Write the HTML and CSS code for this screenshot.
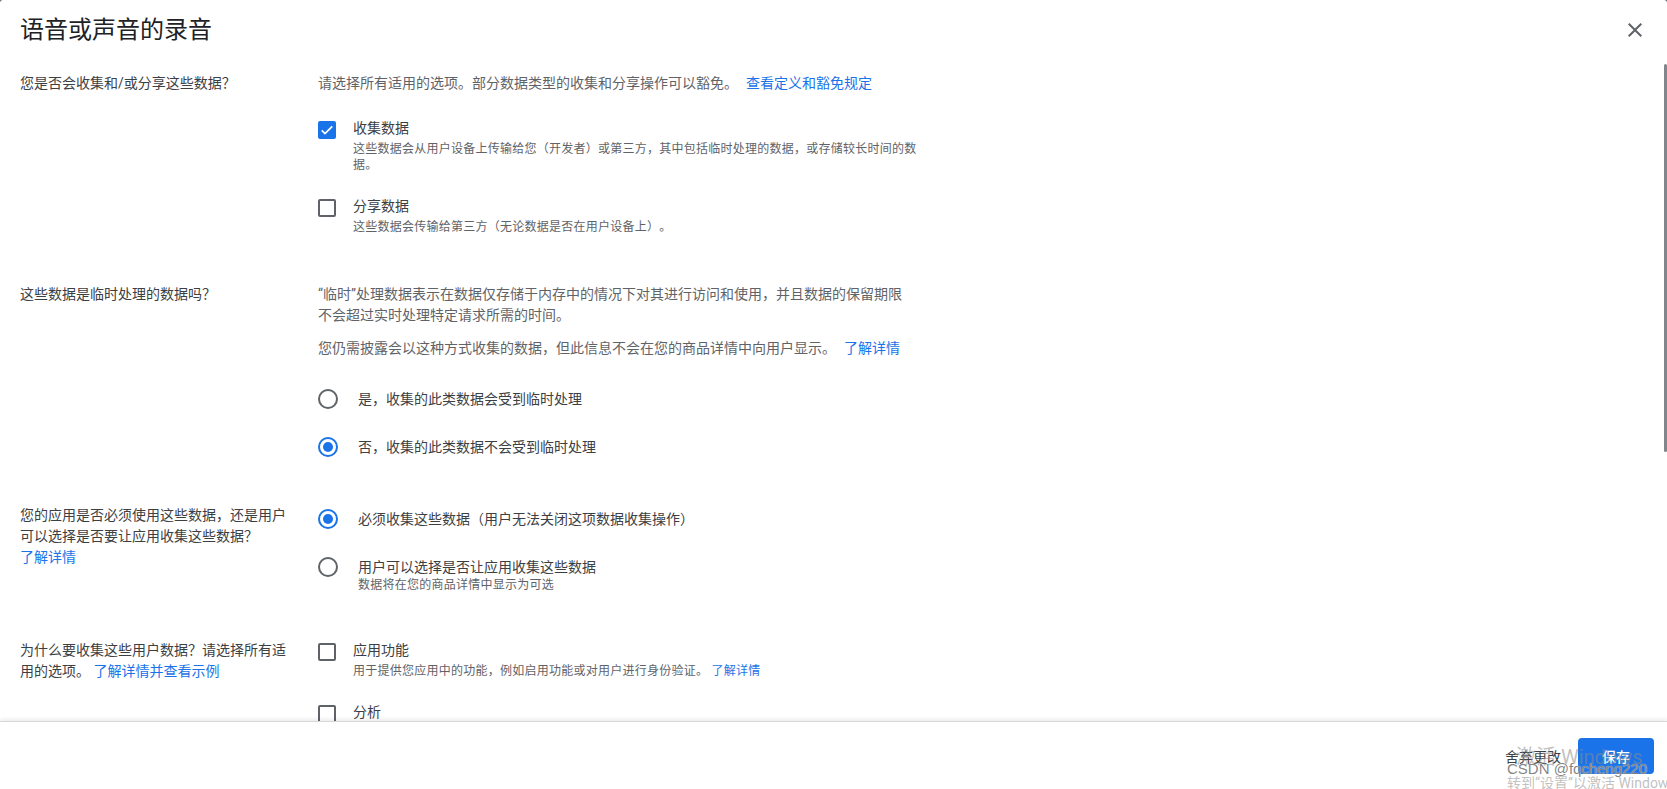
FILE: index.html
```html
<!DOCTYPE html>
<html lang="zh-CN">
<head>
    <meta charset="UTF-8">
    <meta name="viewport" content="width=device-width, initial-scale=1.0">
    <title>语音或声音的录音</title>
    <link rel="stylesheet" href="styles.css">
</head>
<body>
    <div class="dialog">
        <div class="dialog-header">
            <h1>语音或声音的录音</h1>
            <button class="close-btn" aria-label="关闭">
                <svg viewBox="0 0 24 24" width="24" height="24"><path d="M19 6.41L17.59 5 12 10.59 6.41 5 5 6.41 10.59 12 5 17.59 6.41 19 12 13.41 17.59 19 19 17.59 13.41 12z"/></svg>
            </button>
        </div>

        <div class="dialog-body">
            <!-- 收集 / 分享 -->
            <div class="section">
                <div class="question">您是否会收集和/或分享这些数据？</div>
                <div class="answer">
                    <p class="hint">请选择所有适用的选项。部分数据类型的收集和分享操作可以豁免。<a href="#">查看定义和豁免规定</a></p>
                    <div class="check-list">
                        <div class="check-item">
                            <span class="checkbox checked">
                                <svg viewBox="0 0 24 24"><path d="M3 12.5l5.6 5.6L21 5.7"/></svg>
                            </span>
                            <div class="item-text">
                                <div class="item-title">收集数据</div>
                                <div class="item-desc">这些数据会从用户设备上传输给您（开发者）或第三方，其中包括临时处理的数据，或存储较长时间的数据。</div>
                            </div>
                        </div>
                        <div class="check-item">
                            <span class="checkbox"></span>
                            <div class="item-text">
                                <div class="item-title">分享数据</div>
                                <div class="item-desc">这些数据会传输给第三方（无论数据是否在用户设备上）。</div>
                            </div>
                        </div>
                    </div>
                </div>
            </div>

            <!-- 临时处理 -->
            <div class="section section-ephemeral">
                <div class="question">这些数据是临时处理的数据吗？</div>
                <div class="answer">
                    <p class="para">“临时”处理数据表示在数据仅存储于内存中的情况下对其进行访问和使用，并且数据的保留期限不会超过实时处理特定请求所需的时间。</p>
                    <p class="para">您仍需披露会以这种方式收集的数据，但此信息不会在您的商品详情中向用户显示。<a href="#">了解详情</a></p>
                    <div class="radio-list">
                        <div class="radio-item">
                            <span class="radio"></span>
                            <div class="item-text">
                                <div class="item-title">是，收集的此类数据会受到临时处理</div>
                            </div>
                        </div>
                        <div class="radio-item">
                            <span class="radio checked"></span>
                            <div class="item-text">
                                <div class="item-title">否，收集的此类数据不会受到临时处理</div>
                            </div>
                        </div>
                    </div>
                </div>
            </div>

            <!-- 必须 / 可选 -->
            <div class="section section-required">
                <div class="question question-offset">
                    您的应用是否必须使用这些数据，还是用户可以选择是否要让应用收集这些数据？
                    <a class="block-link" href="#">了解详情</a>
                </div>
                <div class="answer">
                    <div class="radio-list flush">
                        <div class="radio-item">
                            <span class="radio checked"></span>
                            <div class="item-text">
                                <div class="item-title">必须收集这些数据（用户无法关闭这项数据收集操作）</div>
                            </div>
                        </div>
                        <div class="radio-item">
                            <span class="radio"></span>
                            <div class="item-text">
                                <div class="item-title">用户可以选择是否让应用收集这些数据</div>
                                <div class="item-desc tight">数据将在您的商品详情中显示为可选</div>
                            </div>
                        </div>
                    </div>
                </div>
            </div>

            <!-- 收集目的 -->
            <div class="section section-purpose">
                <div class="question">为什么要收集这些用户数据？请选择所有适用的选项。 <a href="#">了解详情并查看示例</a></div>
                <div class="answer">
                    <div class="check-list flush">
                        <div class="check-item">
                            <span class="checkbox"></span>
                            <div class="item-text">
                                <div class="item-title">应用功能</div>
                                <div class="item-desc">用于提供您应用中的功能，例如启用功能或对用户进行身份验证。 <a href="#">了解详情</a></div>
                            </div>
                        </div>
                        <div class="check-item">
                            <span class="checkbox"></span>
                            <div class="item-text">
                                <div class="item-title">分析</div>
                                <div class="item-desc">用于收集与用户如何使用您的应用有关的数据。</div>
                            </div>
                        </div>
                    </div>
                </div>
            </div>
        </div>

        <div class="dialog-footer">
            <button class="btn-text">舍弃更改</button>
            <button class="btn-primary">保存</button>
        </div>

        <div class="scroll-thumb"></div>

        <div class="win-mark">
            <div class="win-mark-title">激活 Windows</div>
            <div class="win-mark-sub">转到“设置”以激活 Windows。</div>
        </div>
        <div class="csdn-mark">CSDN @fqcheng220</div>
    </div>
</body>
</html>
```

FILE: styles.css
```css
* {
    box-sizing: border-box;
}
html, body {
    margin: 0;
    height: 100%;
}
body {
    background-color: #5f6368;
    font-family: Roboto, "Noto Sans CJK SC", sans-serif;
    color: #3c4043;
    overflow: hidden;
    text-spacing-trim: space-all;
}
a {
    color: #1a73e8;
    text-decoration: none;
}
.dialog {
    position: relative;
    height: 100vh;
    background-color: #fff;
    border-radius: 3px 3px 0 0;
    display: flex;
    flex-direction: column;
    overflow: hidden;
}
.dialog-header {
    height: 60px;
    flex-shrink: 0;
    display: flex;
    align-items: center;
    justify-content: space-between;
    padding: 0 20px;
}
.dialog-header h1 {
    margin: 0;
    font-size: 24px;
    line-height: 32px;
    font-weight: 400;
    color: #202124;
}
.close-btn {
    width: 24px;
    height: 24px;
    padding: 0;
    border: none;
    background: none;
    fill: #5f6368;
    cursor: pointer;
}
.close-btn svg {
    display: block;
}
.dialog-body {
    flex: 1;
    overflow: hidden;
    padding: 13px 20px 0;
}
.section {
    display: grid;
    grid-template-columns: 270px 601px;
    column-gap: 28px;
}
.section-ephemeral {
    margin-top: 49px;
}
.section-required {
    margin-top: 24px;
}
.section-purpose {
    margin-top: 33px;
}
.question {
    font-size: 14px;
    line-height: 21px;
    color: #3c4043;
}
.question-offset {
    padding-top: 10px;
}
.block-link {
    display: block;
}
.hint, .para {
    margin: 0;
    max-width: 590px;
    font-size: 14px;
    line-height: 20px;
    color: #5f6368;
}
.hint a, .para a {
    margin-left: 8px;
}
.para {
    line-height: 21px;
}
.para + .para {
    margin-top: 12px;
}
.check-list {
    margin-top: 25px;
}
.check-list.flush {
    margin-top: 0;
}
.check-item {
    display: flex;
    align-items: flex-start;
}
.check-item + .check-item {
    margin-top: 23px;
}
.checkbox {
    width: 18px;
    height: 18px;
    flex-shrink: 0;
    margin-top: 3px;
    margin-right: 17px;
    border: 2px solid #5f6368;
    border-radius: 2px;
}
.checkbox.checked {
    background-color: #1a73e8;
    border-color: #1a73e8;
}
.checkbox svg {
    display: block;
    width: 14px;
    height: 14px;
    fill: none;
    stroke: #fff;
    stroke-width: 3;
}
.item-title {
    font-size: 14px;
    line-height: 20px;
    color: #3c4043;
}
.item-desc {
    margin-top: 3px;
    font-size: 12px;
    line-height: 16px;
    letter-spacing: 0.25px;
    color: #5f6368;
}
.item-desc.tight {
    margin-top: 0;
}
.radio-list {
    margin-top: 16px;
}
.radio-list.flush {
    margin-top: 0;
}
.radio-item {
    display: flex;
    align-items: flex-start;
    padding: 14px 0;
}
.radio {
    width: 20px;
    height: 20px;
    flex-shrink: 0;
    margin-right: 20px;
    border: 2px solid #5f6368;
    border-radius: 50%;
    display: flex;
    align-items: center;
    justify-content: center;
}
.radio.checked {
    border-color: #1a73e8;
}
.radio.checked::after {
    content: "";
    width: 10px;
    height: 10px;
    border-radius: 50%;
    background-color: #1a73e8;
}
.dialog-footer {
    position: relative;
    height: 68px;
    flex-shrink: 0;
    display: flex;
    align-items: center;
    justify-content: flex-end;
    gap: 8px;
    padding-right: 13px;
    background-color: #fff;
    border-top: 1px solid #d5d7da;
    box-shadow: 0 -2px 4px rgba(0, 0, 0, 0.08);
}
.btn-text {
    height: 36px;
    padding: 0 9px;
    border: none;
    background: none;
    font-family: inherit;
    font-size: 14px;
    color: #3c4043;
    cursor: pointer;
}
.btn-primary {
    height: 36px;
    padding: 0 24px;
    border: none;
    border-radius: 4px;
    background-color: #1a73e8;
    font-family: inherit;
    font-size: 14px;
    font-weight: 500;
    color: #fff;
    cursor: pointer;
}
.scroll-thumb {
    position: absolute;
    top: 64px;
    right: 0;
    width: 3px;
    height: 388px;
    border-radius: 2px;
    background-color: #80868b;
}
.win-mark {
    position: absolute;
    left: 1516px;
    top: 744px;
    white-space: nowrap;
    color: rgba(140, 140, 140, 0.55);
    pointer-events: none;
}
.win-mark-title {
    font-size: 20px;
    line-height: 26px;
}
.win-mark-sub {
    margin-top: 4px;
    margin-left: -9px;
    font-size: 14px;
    line-height: 18px;
}
.csdn-mark {
    position: absolute;
    left: 1507px;
    top: 760px;
    font-family: "Liberation Sans", sans-serif;
    font-size: 15px;
    line-height: 18px;
    color: rgba(110, 110, 110, 0.85);
    text-shadow: 0 0 1px #fff;
    pointer-events: none;
    white-space: nowrap;
}
```
